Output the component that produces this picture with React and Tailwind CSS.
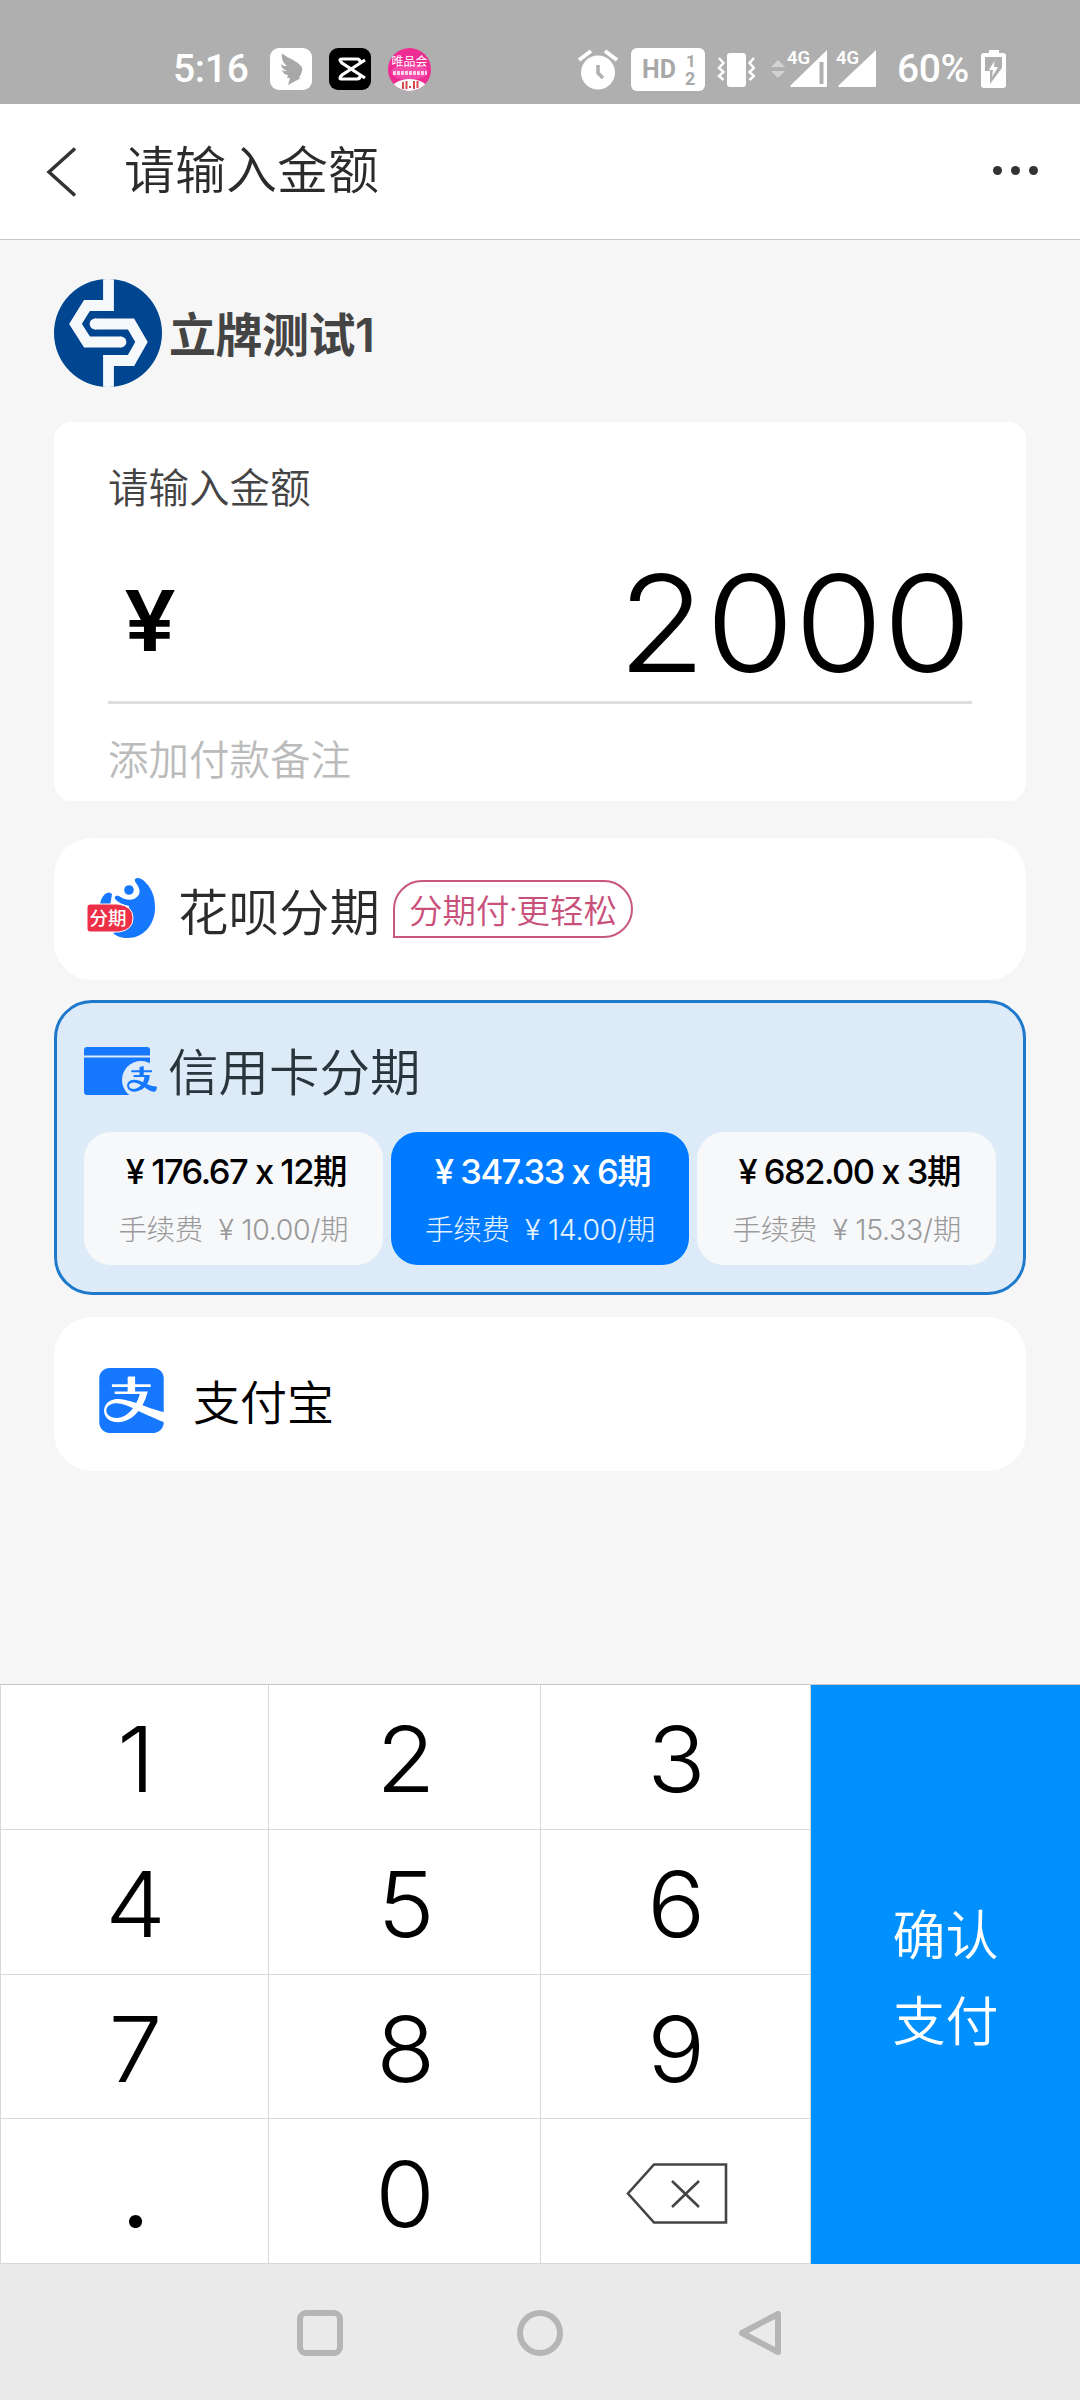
import { useState } from 'react';
import { AiOutlineAlipay } from 'react-icons/ai';
import { SiAlipay } from 'react-icons/si';

const plans = [
  { id: 12, amount: '176.67', fee: '10.00' },
  { id: 6,  amount: '347.33', fee: '14.00' },
  { id: 3,  amount: '682.00', fee: '15.33' },
];

const keys = ['1', '2', '3', '4', '5', '6', '7', '8', '9', '.', '0', 'del'];

function StatusBar() {
  return (
    <div className="h-[104px] bg-[#afafaf] flex items-start pt-[47px] pl-[173px] pr-[73px] text-white font-['Roboto',sans-serif]">
      <span className="w-[97px] text-[39px] leading-[44px] font-medium tracking-[-0.300px]">5:16</span>

      {/* Notification icons */}
      <div className="flex gap-[17px] pt-px">
        <svg className="w-[42px] h-[42px]" viewBox="0 0 42 42">
          <rect width="42" height="42" rx="9" fill="#fff" />
          <path d="M12 5c3 4 13 7 17 11 4 3 4 6 2 10l-2 4h2L18 37l2-7h-3l1-3c-3 0-5-2-6-5 2 1 3 1 5 1-4-2-6-4-6-7 2 2 4 2 6 2-4-3-6-8-5-13z" fill="#a8a8a8" />
        </svg>
        <svg className="w-[42px] h-[42px]" viewBox="0 0 42 42">
          <rect width="42" height="42" rx="9" fill="#000" />
          <path d="M36 12 13 27q-4 4 0 4h15q3 0 3-3M36 30 13 15q-4-4 0-4h15q3 0 3 3" fill="none" stroke="#fff" strokeWidth="3.200" />
        </svg>
        <svg className="w-[43px] h-[43px]" viewBox="0 0 43 43">
          <defs>
            <clipPath id="vipClip"><circle cx="21.5" cy="21.5" r="21.5" /></clipPath>
          </defs>
          <g clipPath="url(#vipClip)">
            <rect width="43" height="43" fill="#ef2c93" />
            <ellipse cx="21.5" cy="24" rx="18" ry="8" fill="#f64aa8" />
            <ellipse cx="21.5" cy="43" rx="19" ry="12" fill="#fff" />
          </g>
          <text x="21.5" y="18" textAnchor="middle" fontSize="12" fill="#fff" className="font-['Noto_Sans_CJK_SC',sans-serif]">唯品会</text>
          <path d="M5 25h34" stroke="#fff" strokeWidth="4" strokeDasharray="3 1" opacity=".75" />
          <path d="M15 34v7M18.500 33v8M22 38v2M26 33v8M29.500 33v7" stroke="#d24a4e" strokeWidth="2" />
        </svg>
      </div>

      {/* System icons */}
      <div className="flex ml-auto pt-px">
        <svg className="w-[42px] h-[42px]" viewBox="0 0 42 42">
          <circle cx="21" cy="24.500" r="17" fill="#fff" />
          <path d="M2 12 14 3M28 3l12 9" stroke="#fff" strokeWidth="4" />
          <path d="M21 17v8l5 5" fill="none" stroke="#afafaf" strokeWidth="3.500" />
        </svg>
        <svg className="w-[74px] h-[43px] ml-[12px]" viewBox="0 0 74 43">
          <rect width="74" height="43" rx="6" fill="#fff" />
          <g fill="#a8a8a8" fontWeight="700">
            <text x="11" y="30" fontSize="25">HD</text>
            <text x="55" y="19" fontSize="17">1</text>
            <text x="54" y="37" fontSize="18">2</text>
          </g>
        </svg>
        <svg className="w-[38px] h-[42px] ml-[12px]" viewBox="0 0 38 42">
          <rect x="10" y="5" width="19" height="34" rx="3" fill="#fff" />
          <path d="m2 10 4.500 5-4.500 5 4.500 4-4.500 4 4.500 4M37 10l-4.500 5 4.500 5-4.500 4 4.500 4-4.500 4" fill="none" stroke="#fff" strokeWidth="2.500" />
        </svg>
        <svg className="w-[16px] h-[42px] ml-[15px]" viewBox="0 0 16 42">
          <path d="m1 19 7-7 7 7zM1 23h14l-7 7z" fill="#d2d2d2" />
        </svg>
        <svg className="w-[42px] h-[42px] ml-px" viewBox="0 0 42 42">
          <path d="M40 2v36a1 1 0 0 1-1 1H5a1 1 0 0 1-1-2z" fill="#fff" />
          <path d="M34.500 14v22" stroke="#afafaf" strokeWidth="4" />
          <text x="0" y="16" fontSize="18.5" fontWeight="600" fill="#fff">4G</text>
        </svg>
        <svg className="w-[42px] h-[42px] ml-[7px]" viewBox="0 0 42 42">
          <path d="M40 2v36a1 1 0 0 1-1 1H4a1 1 0 0 1-1-2z" fill="#fff" />
          <text x="0" y="16" fontSize="18.5" fontWeight="600" fill="#fff">4G</text>
        </svg>
        <span className="ml-[19px] w-[84px] -mt-px text-[39px] leading-[44px] font-medium tracking-[-0.400px]">60%</span>
        <svg className="w-[26px] h-[42px]" viewBox="0 0 26 42">
          <path d="M8 2h10v3h4q3 0 3 3v29q0 3-3 3H3q-3 0-3-3V8q0-3 3-3h5z" fill="#fff" />
          <path d="M4 9h17v11L9 36V23H4z" fill="#afafaf" />
          <path d="M13.500 13 8 22h4l-1 7 6-10h-4z" fill="#fff" />
        </svg>
      </div>
    </div>
  );
}

function MerchantLogo() {
  return (
    <svg className="w-[108px] h-[108px]" viewBox="0 0 108 108">
      <defs>
        <clipPath id="logoClip"><circle cx="54" cy="54" r="54" /></clipPath>
      </defs>
      <g clipPath="url(#logoClip)">
        <rect width="108" height="108" fill="#00458f" />
        <g fill="none" stroke="#f6f9fc" strokeWidth="10.800">
          <path d="M54.500-2v28.500H33L21.500 45 33 63h34" />
          <path d="M54.500 110V81.500H77L87.500 63 77 45H41" />
        </g>
        <circle cx="67" cy="63" r="5.400" fill="#f6f9fc" />
        <circle cx="41" cy="45" r="5.400" fill="#f6f9fc" />
      </g>
    </svg>
  );
}

function HuabeiIcon() {
  return (
    <svg className="w-[70px] h-[62px]" viewBox="0 0 70 62">
      <path d="M49 5q-3-4 1-5 5 0 9 5c6 6 9 14 9 25 0 17-12 30-27 30-7 0-12-2-15-5l18-8-2-19c-5-1-10-3-13-6-3-3 0-5 3-4 4 3 10 5 15 3 6-3 8-8 2-16z" fill="#1677ff" />
      <circle cx="42" cy="12" r="4.800" fill="#1677ff" />
      <path d="M18 16q4-3 7 0l-2 12H13q0-7 5-12z" fill="#1677ff" />
      <path d="M3 26h28q15 2 15 14T32 54H3q-3 0-3-3V29q0-3 3-3z" fill="#ee2f48" stroke="#fff" strokeWidth="1" />
      <text x="2.500" y="47" fontSize="18.5" fontWeight="500" fill="#fff" className="font-['Noto_Sans_CJK_SC',sans-serif]">分期</text>
    </svg>
  );
}

function CreditCardIcon() {
  return (
    <div className="relative w-[74px] h-[48px]">
      <svg className="w-[74px] h-[48px]" viewBox="0 0 74 48">
        <path d="M3 0h60q3 0 3 3v5.500H0V3q0-3 3-3zM0 10.500h66V48H3q-3 0-3-3z" fill="#1677ff" />
        <circle cx="57" cy="33" r="19" fill="#ddebf8" />
      </svg>
      <AiOutlineAlipay className="absolute left-[40px] top-[15px] w-[36px] h-[34px] text-[#1677ff]" />
    </div>
  );
}

function Plan({ plan, active, onClick }) {
  return (
    <button
      onClick={onClick}
      className={`h-[133px] rounded-[27px] flex flex-col items-center pt-[16px] whitespace-nowrap ${
        active ? 'bg-[#007aff] text-white' : 'bg-[#f7f8fa] text-black'
      }`}
    >
      <span className="pl-[5px] text-[34.500px] leading-[48px] font-medium tracking-[-1.500px]">¥ {plan.amount} x {plan.id}期</span>
      <span className={`mt-[10px] text-[28.500px] leading-[48px] font-light tracking-[-0.300px] ${active ? 'text-[#e6f3ff]' : 'text-[#999]'}`}>
        手续费&nbsp; ¥ {plan.fee}/期
      </span>
    </button>
  );
}

export default function App() {
  const [amount, setAmount] = useState('2000');
  const [months, setMonths] = useState(6);

  const press = (k) => setAmount(a => (k === 'del' ? a.slice(0, -1) : a + k));

  return (
    <div className="w-[1080px] h-[2400px] flex flex-col overflow-hidden bg-[#f6f6f6] font-['Inter','Noto_Sans_CJK_SC',sans-serif]">
      <StatusBar />

      {/* Header */}
      <div className="h-[136px] bg-white border-b border-[#c4c4c4] flex items-center pl-[46px] pr-[42px]">
        <svg className="w-[32px] h-[50px]" viewBox="0 0 32 50">
          <path d="M29 1.500 3 25l26 23.500" fill="none" stroke="#333" strokeWidth="3.500" />
        </svg>
        <h1 className="ml-[46px] pb-[9px] text-[51px] leading-[70px] font-[350] text-[#2b2b2b] font-['Noto_Sans_CJK_SC',sans-serif]">请输入金额</h1>
        <div className="ml-auto flex gap-[8.500px] pb-[2px]">
          <i className="w-[9.500px] h-[9.500px] rounded-full bg-[#333]" />
          <i className="w-[9.500px] h-[9.500px] rounded-full bg-[#333]" />
          <i className="w-[9.500px] h-[9.500px] rounded-full bg-[#333]" />
        </div>
      </div>

      <div className="flex-1 px-[54px] pt-[39px]">
        {/* Merchant */}
        <div className="flex items-center h-[108px]">
          <MerchantLogo />
          <span className="ml-[7px] pt-[4px] text-[47px] leading-[64px] font-bold tracking-[-0.500px] text-[#444]">
            立牌测试<span className="font-semibold">1</span>
          </span>
        </div>

        {/* Amount */}
        <div className="mt-[35px] h-[379px] rounded-[18px] bg-white px-[54px] pt-[36px]">
          <p className="text-[40.500px] leading-[56px] font-[350] text-[#444] font-['Noto_Sans_CJK_SC',sans-serif]">请输入金额</p>
          <div className="h-[190px] border-b-[3px] border-[#dedede] flex items-center justify-between pl-[16px] pt-[31px]">
            <span className="pb-[5px] text-[84px] leading-[100px] font-semibold origin-left scale-x-110">¥</span>
            <span className="text-[134px] leading-[150px] font-light origin-right scale-x-107">{amount}</span>
          </div>
          <p className="mt-[26px] text-[40.500px] leading-[56px] font-[350] text-[#bbb] font-['Noto_Sans_CJK_SC',sans-serif]">添加付款备注</p>
        </div>

        {/* Huabei */}
        <div className="mt-[37px] h-[142px] rounded-[38px] bg-white flex items-center pl-[33px]">
          <HuabeiIcon />
          <span className="ml-[21px] text-[50.500px] leading-[70px] font-[350] text-[#2b2b2b] font-['Noto_Sans_CJK_SC',sans-serif]">花呗分期</span>
          <span className="ml-[13px] w-[240px] h-[58px] border-2 border-[#c8587c] rounded-[29px] rounded-bl-none flex items-center justify-center text-[33.500px] leading-[40px] font-[350] text-[#c8507a] font-['Noto_Sans_CJK_SC',sans-serif]">
            分期付<i className="w-[8px] -ml-px text-center not-italic font-['Inter']">·</i>更轻松
          </span>
        </div>

        {/* Credit card */}
        <div className="mt-[20px] h-[295px] rounded-[38px] border-[3px] border-[#1e78cc] bg-[#ddebf8] pt-[33px] px-[27px]">
          <div className="flex items-center h-[70px]">
            <CreditCardIcon />
            <span className="ml-[10px] pb-[4px] text-[50.500px] leading-[70px] font-[350] text-[#2a343c] font-['Noto_Sans_CJK_SC',sans-serif]">信用卡分期</span>
          </div>
          <div className="mt-[26px] grid grid-cols-3 gap-[8px]">
            {plans.map(p => (
              <Plan key={p.id} plan={p} active={p.id === months} onClick={() => setMonths(p.id)} />
            ))}
          </div>
        </div>

        {/* Alipay */}
        <div className="mt-[22px] h-[154px] rounded-[38px] bg-white flex items-center pl-[45px] pt-[12px]">
          <SiAlipay className="w-[65px] h-[65px] text-[#1677ff]" />
          <span className="ml-[29px] text-[47px] leading-[64px] font-[350] text-black font-['Noto_Sans_CJK_SC',sans-serif]">支付宝</span>
        </div>
      </div>

      {/* Keypad */}
      <div className="h-[580px] flex border-t border-[#c8c8c8]">
        <div className="w-[811px] grid grid-cols-[268px_272px_270px] grid-rows-4 border-l border-[#d8d8d8]">
          {keys.map(k => (
            <button key={k} onClick={() => press(k)}
              className="bg-white border-r border-b border-[#d8d8d8] flex items-center justify-center text-[91px] leading-[100px] font-light text-black pt-[5px] pl-[2px]">
              {k === 'del' ? (
                <svg className="w-[102px] h-[62px]" viewBox="0 0 102 62">
                  <path d="M28 1.500h72v58H28L2 30.500z" fill="none" stroke="#444" strokeWidth="2.600" />
                  <path d="m46 18 27 26M73 18 46 44" stroke="#444" strokeWidth="2.600" />
                </svg>
              ) : (
                <span className={k === '.' ? 'font-medium' : 'scale-x-106'}>{k}</span>
              )}
            </button>
          ))}
        </div>
        <button className="flex-1 bg-[#0091ff] flex items-center justify-center text-center text-[53px] leading-[86px] font-[350] text-white font-['Noto_Sans_CJK_SC',sans-serif]">
          确认<br />支付
        </button>
      </div>

      {/* System navigation */}
      <div className="h-[136px] bg-[#eaeaea] flex items-center justify-center gap-[174px] pt-[2px]">
        <svg className="w-[46px] h-[46px]" viewBox="0 0 46 46">
          <rect x="3" y="3" width="40" height="40" rx="6" fill="none" stroke="#b5b5b5" strokeWidth="6" />
        </svg>
        <svg className="w-[46px] h-[46px]" viewBox="0 0 46 46">
          <circle cx="23" cy="23" r="20" fill="none" stroke="#b5b5b5" strokeWidth="6" />
        </svg>
        <svg className="w-[46px] h-[46px]" viewBox="0 0 46 46">
          <path d="M41 4v38L5 23z" fill="none" stroke="#b5b5b5" strokeWidth="6" strokeLinejoin="round" />
        </svg>
      </div>
    </div>
  );
}
